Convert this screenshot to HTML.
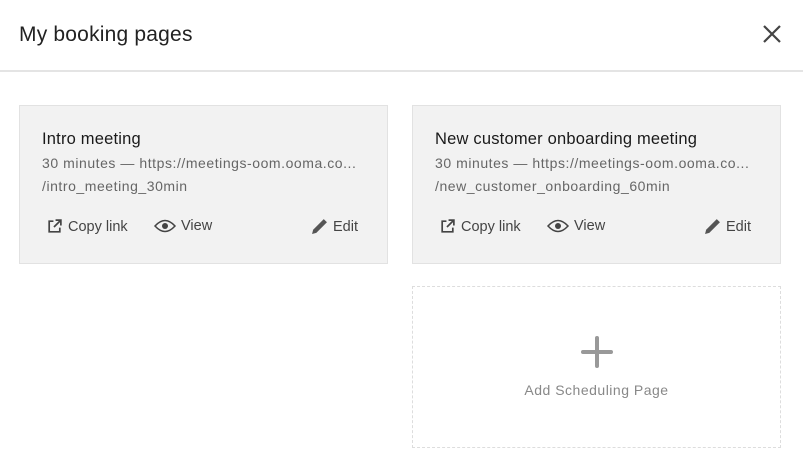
<!DOCTYPE html>
<html><head><style>
body{margin:0;width:803px;height:468px;background:#fff;font-family:"Liberation Sans",sans-serif;position:relative;overflow:hidden}
.h{position:absolute;left:19px;top:23px;font-size:21px;letter-spacing:0.2px;color:#222}
.x{position:absolute;left:761px;top:23px}
.hr{position:absolute;left:0;top:70px;width:803px;height:2px;background:#e4e4e4}
.card{position:absolute;top:105px;width:367px;height:157px;background:#f2f2f2;border:1px solid #e2e2e2}
.t{position:absolute;left:22px;top:24px;font-size:16.5px;letter-spacing:0.2px;color:#1a1a1a}
.s{position:absolute;left:22px;top:46px;font-size:14px;letter-spacing:0.55px;color:#666;line-height:23px;white-space:nowrap}
.a{position:absolute;top:112px;font-size:14.5px;color:#444;display:flex;align-items:center;gap:5px}
.add{position:absolute;left:412px;top:286px;width:367px;height:160px;border:1px dashed #ddd}
</style></head><body>
<div class="h">My booking pages</div>
<svg class="x" width="22" height="22" viewBox="0 0 22 22"><path d="M3 3L19 19M19 3L3 19" stroke="#444" stroke-width="2.2"/></svg>
<div class="hr"></div>

<div class="card" style="left:19px">
<div class="t">Intro meeting</div>
<div class="s">30 minutes — https://meetings-oom.ooma.co...<br>/intro_meeting_30min</div>
<div class="a" style="left:26px"><svg width="17" height="17" viewBox="0 0 16 16"><path d="M7 3H3v10h10V9M9 2h5v5M14 2L7.5 8.5" fill="none" stroke="#444" stroke-width="1.6"/></svg>Copy link</div>
<div class="a" style="left:134px"><svg width="22" height="14" viewBox="0 0 22 14"><path d="M1 7Q11 -4 21 7Q11 18 1 7Z" fill="none" stroke="#444" stroke-width="1.5"/><circle cx="11" cy="7" r="3" fill="#444"/></svg>View</div>
<div class="a" style="left:291px"><svg width="17" height="17" viewBox="0 0 16 16"><path d="M1 15l1-4L12 1l3 3L5 14z" fill="#555"/></svg>Edit</div>
</div>

<div class="card" style="left:412px">
<div class="t">New customer onboarding meeting</div>
<div class="s">30 minutes — https://meetings-oom.ooma.co...<br>/new_customer_onboarding_60min</div>
<div class="a" style="left:26px"><svg width="17" height="17" viewBox="0 0 16 16"><path d="M7 3H3v10h10V9M9 2h5v5M14 2L7.5 8.5" fill="none" stroke="#444" stroke-width="1.6"/></svg>Copy link</div>
<div class="a" style="left:134px"><svg width="22" height="14" viewBox="0 0 22 14"><path d="M1 7Q11 -4 21 7Q11 18 1 7Z" fill="none" stroke="#444" stroke-width="1.5"/><circle cx="11" cy="7" r="3" fill="#444"/></svg>View</div>
<div class="a" style="left:291px"><svg width="17" height="17" viewBox="0 0 16 16"><path d="M1 15l1-4L12 1l3 3L5 14z" fill="#555"/></svg>Edit</div>
</div>

<div class="add">
<svg style="position:absolute;left:168px;top:49px" width="32" height="32" viewBox="0 0 32 32"><path d="M16 2V30M2 16H30" stroke="#999" stroke-width="4" stroke-linecap="round"/></svg>
<div style="position:absolute;left:0;width:367px;top:95px;text-align:center;font-size:14px;letter-spacing:0.5px;color:#888">Add Scheduling Page</div>
</div>
</body></html>
